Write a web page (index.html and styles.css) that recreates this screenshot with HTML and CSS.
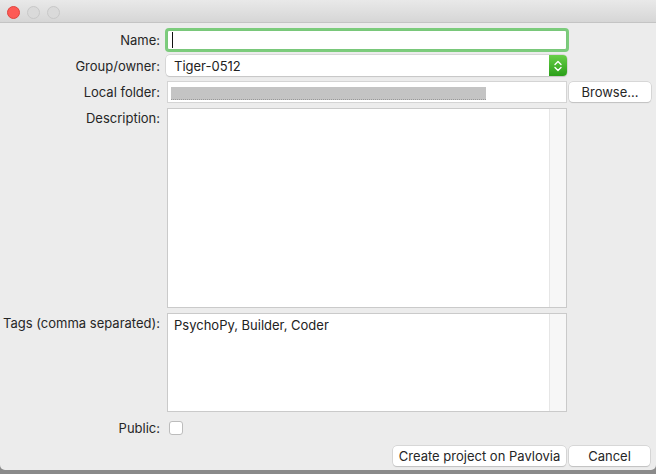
FILE: index.html
```html
<!DOCTYPE html>
<html lang="en">
<head>
    <meta charset="UTF-8">
    <meta name="viewport" content="width=device-width, initial-scale=1.0">
    <title>Create project on Pavlovia</title>
    <link rel="stylesheet" href="styles.css">
</head>
<body>
    <div class="window">
        <div class="titlebar">
            <span class="light light-close"></span>
            <span class="light"></span>
            <span class="light"></span>
        </div>

        <div class="form">
            <!-- Name -->
            <label class="label" for="projName">Name:</label>
            <div class="field field-focus" id="projName"><span class="caret"></span></div>
            <div></div>

            <!-- Group / owner -->
            <label class="label">Group/owner:</label>
            <div class="popup">
                <span class="popup-text">Tiger-0512</span>
                <span class="stepper">
                    <svg width="10" height="14" viewBox="0 0 10 14">
                        <path d="M2 5.5 L5 2.5 L8 5.5" fill="none" stroke="#fff" stroke-width="1.4" stroke-linecap="round" stroke-linejoin="round"/>
                        <path d="M2 8.5 L5 11.5 L8 8.5" fill="none" stroke="#fff" stroke-width="1.4" stroke-linecap="round" stroke-linejoin="round"/>
                    </svg>
                </span>
            </div>
            <div></div>

            <!-- Local folder -->
            <label class="label">Local folder:</label>
            <div class="field field-path"><span class="blurred"></span></div>
            <button class="btn btn-browse">Browse...</button>

            <!-- Description -->
            <label class="label label-top">Description:</label>
            <div class="textarea"><div class="text"></div><div class="scroll"></div></div>
            <div></div>

            <!-- Tags -->
            <label class="label label-top">Tags (comma separated):</label>
            <div class="textarea"><div class="text">PsychoPy, Builder, Coder</div><div class="scroll"></div></div>
            <div></div>

            <!-- Public -->
            <label class="label">Public:</label>
            <div class="check-wrap"><span class="checkbox"></span></div>
            <div></div>
        </div>

        <div class="actions">
            <button class="btn btn-create">Create project on Pavlovia</button>
            <button class="btn btn-cancel">Cancel</button>
        </div>
    </div>
</body>
</html>
```

FILE: styles.css
```css
html, body {
    margin: 0;
    padding: 0;
}
body {
    width: 656px;
    height: 474px;
    overflow: hidden;
    background: #8a8a8a;
    font-family: Inter, "Liberation Sans", Arial, sans-serif;
    font-size: 13px;
    color: #262626;
}
.window {
    height: 470px;
    background: #ececec;
    border-radius: 0 0 5px 5px;
    overflow: hidden;
}
.titlebar {
    height: 23px;
    border-bottom: 1px solid #c4c4c4;
    background: linear-gradient(#e9e9e9, #d6d6d6);
    display: flex;
    align-items: center;
    gap: 7px;
    padding-left: 7px;
    padding-top: 2px;
    box-sizing: border-box;
}
.light {
    width: 11px;
    height: 11px;
    border-radius: 50%;
    background: #dadada;
    border: 1px solid #c8c8c8;
}
.light-close {
    background: #fd5a55;
    border-color: #e0443e;
}
.form {
    display: grid;
    grid-template-columns: 167px 400px 85px;
    grid-template-rows: 20px 21px 22px 200px 99px 22px;
    row-gap: 5px;
    padding-top: 7px;
}
.label {
    text-align: right;
    padding-right: 7px;
    align-self: center;
    line-height: 16px;
    white-space: nowrap;
}
.label-top {
    align-self: start;
    padding-top: 2px;
}
.field {
    background: #fff;
    border: 1px solid #cfcfcf;
    box-sizing: border-box;
    position: relative;
}
.field-focus {
    border-color: #79c77a;
    box-shadow: 0 0 0 2px #7ccc7c;
    border-radius: 2px;
    height: 20px;
}
.caret {
    position: absolute;
    left: 4px;
    top: 1px;
    width: 1px;
    height: 16px;
    background: #111;
}
.field-path {
    height: 22px;
    border-color: #d4d4d4;
}
.blurred {
    position: absolute;
    left: 3px;
    top: 5px;
    width: 315px;
    height: 12px;
    background: #c4c4c4;
    border-bottom: 1px dotted #999;
}
.popup {
    margin-left: -1px;
    width: 401px;
    background: #fff;
    border-radius: 4px;
    box-shadow: 0 0 0 0.5px #c4c4c4, 0 1px 1px rgba(0,0,0,0.15);
    display: flex;
    align-items: center;
    justify-content: space-between;
    overflow: hidden;
}
.popup-text {
    padding-left: 8px;
    color: #222;
}
.stepper {
    width: 18px;
    height: 21px;
    background: linear-gradient(#68cf48, #2a9f19);
    display: flex;
    align-items: center;
    justify-content: center;
}
.textarea {
    display: flex;
    background: #fff;
    border: 1px solid #cacaca;
    box-sizing: border-box;
}
.text {
    flex: 1;
    padding: 3px 6px;
    line-height: 16px;
    color: #222;
}
.scroll {
    width: 16px;
    background: #f7f7f7;
    border-left: 1px solid #e6e6e6;
}
.check-wrap {
    display: flex;
    align-items: center;
    padding-left: 2px;
}
.checkbox {
    width: 14px;
    height: 14px;
    box-sizing: border-box;
    background: #fff;
    border: 1px solid #bcbcbc;
    border-radius: 3px;
}
.btn {
    font-family: inherit;
    font-size: 13px;
    color: #262626;
    background: #fff;
    border: none;
    border-radius: 4px;
    box-shadow: 0 0 0 0.5px #c2c2c2, 0 1px 1px rgba(0,0,0,0.18);
    height: 20px;
    padding: 0;
    margin: 0;
}
.btn-browse {
    margin-left: 2px;
    margin-top: 1px;
    width: 82px;
}
.actions {
    display: flex;
    justify-content: flex-end;
    gap: 3px;
    padding-right: 6px;
    margin-top: 7px;
}
.btn-create {
    width: 173px;
}
.btn-cancel {
    width: 81px;
}
```
